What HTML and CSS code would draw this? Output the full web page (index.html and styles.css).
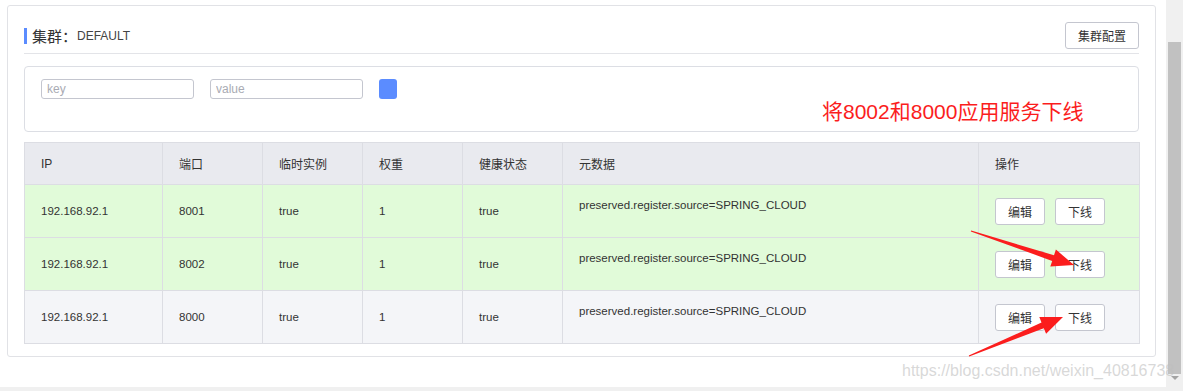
FILE: index.html
```html
<!DOCTYPE html>
<html lang="zh-CN">
<head>
    <meta charset="UTF-8">
    <meta name="viewport" content="width=device-width, initial-scale=1.0">
    <title>集群</title>
    <link rel="stylesheet" href="styles.css">
</head>
<body>
    <div class="viewport">
        <div class="page">
            <div class="card">
                <div class="card-header">
                    <div class="title"><span class="title-mark"></span>集群：<span class="cluster-name">DEFAULT</span></div>
                    <button class="btn">集群配置</button>
                </div>

                <div class="filter">
                    <input class="filter-input" type="text" placeholder="key">
                    <input class="filter-input" type="text" placeholder="value">
                    <button class="filter-add"></button>
                    <div class="note">将8002和8000应用服务下线</div>
                </div>

                <table class="instances">
                    <colgroup>
                        <col style="width: 138px">
                        <col style="width: 100px">
                        <col style="width: 100px">
                        <col style="width: 100px">
                        <col style="width: 100px">
                        <col style="width: 416px">
                        <col style="width: 161px">
                    </colgroup>
                    <thead>
                        <tr>
                            <th>IP</th>
                            <th>端口</th>
                            <th>临时实例</th>
                            <th>权重</th>
                            <th>健康状态</th>
                            <th>元数据</th>
                            <th>操作</th>
                        </tr>
                    </thead>
                    <tbody>
                        <tr class="online">
                            <td>192.168.92.1</td>
                            <td>8001</td>
                            <td>true</td>
                            <td>1</td>
                            <td>true</td>
                            <td class="meta">preserved.register.source=SPRING_CLOUD</td>
                            <td><button class="btn btn-sm">编辑</button><button class="btn btn-sm">下线</button></td>
                        </tr>
                        <tr class="online">
                            <td>192.168.92.1</td>
                            <td>8002</td>
                            <td>true</td>
                            <td>1</td>
                            <td>true</td>
                            <td class="meta">preserved.register.source=SPRING_CLOUD</td>
                            <td><button class="btn btn-sm">编辑</button><button class="btn btn-sm">下线</button></td>
                        </tr>
                        <tr>
                            <td>192.168.92.1</td>
                            <td>8000</td>
                            <td>true</td>
                            <td>1</td>
                            <td>true</td>
                            <td class="meta">preserved.register.source=SPRING_CLOUD</td>
                            <td><button class="btn btn-sm">编辑</button><button class="btn btn-sm">下线</button></td>
                        </tr>
                    </tbody>
                </table>
            </div>
        </div>
        <div class="vscroll">
            <div class="vscroll-thumb"></div>
            <div class="vscroll-arrow"></div>
        </div>
    </div>
    <div class="hscroll"></div>

    <!-- annotation arrows drawn over the screenshot -->
    <svg class="arrows" width="1183" height="391" viewBox="0 0 1183 391">
        <polygon points="971.2,230.5 1054,255.3 1055.9,249.6 1074,265 1050.3,266.6 1052.2,260.9 970.8,231.5" />
        <polygon points="968.8,355.5 1041.5,322.6 1039.3,317.1 1063,317 1046.1,333.7 1043.8,328.2 969.2,356.5" />
    </svg>
    <div class="watermark">https://blog.csdn.net/weixin_40816738</div>
</body>
</html>
```

FILE: styles.css
```css
* {
    box-sizing: border-box;
}
body {
    margin: 0;
    width: 1183px;
    height: 391px;
    overflow: hidden;
    background: #fff;
    font-family: "Liberation Sans", "Noto Sans CJK SC", sans-serif;
    color: #333;
    font-size: 12px;
    position: relative;
}
.viewport {
    display: flex;
    height: 387px;
}
.page {
    width: 1166px;
    padding: 5px 10px 0 7px;
}
.card {
    border: 1px solid #e1e2e6;
    border-radius: 3px;
    padding: 16px 16px 12px 16px;
}
.card-header {
    display: flex;
    justify-content: space-between;
    align-items: flex-start;
    height: 32px;
    padding-bottom: 4px;
    border-bottom: 1px solid #e3e4e8;
}
.title {
    display: flex;
    align-items: center;
    height: 27px;
    font-size: 15px;
    color: #333;
}
.title-mark {
    width: 3px;
    height: 16px;
    background: #5b8cff;
    margin-right: 5px;
}
.cluster-name {
    font-size: 12px;
    color: #444;
}
.btn {
    height: 27px;
    padding: 0 12px;
    border: 1px solid #c4c6cf;
    border-radius: 3px;
    background: #fff;
    color: #333;
    font-family: "Liberation Sans", "Noto Sans CJK SC", sans-serif;
    font-size: 12px;
    cursor: pointer;
}
.filter {
    position: relative;
    display: flex;
    align-items: flex-start;
    gap: 16px;
    margin-top: 12px;
    height: 66px;
    padding: 12px 16px;
    border: 1px solid #dcdee4;
    border-radius: 4px;
}
.filter-input {
    width: 153px;
    height: 20px;
    padding: 0 5px;
    border: 1px solid #c4c6cf;
    border-radius: 3px;
    font-family: "Liberation Sans", "Noto Sans CJK SC", sans-serif;
    font-size: 12px;
    outline: none;
}
.filter-input::placeholder {
    color: #a9abb3;
}
.filter-add {
    width: 18px;
    height: 20px;
    border: none;
    border-radius: 3px;
    background: #5b8cff;
}
.note {
    position: absolute;
    left: 797px;
    top: 28px;
    font-size: 21px;
    color: #fb1d1d;
    white-space: nowrap;
}
.instances {
    margin-top: 10px;
    width: 1115px;
    table-layout: fixed;
    border-collapse: collapse;
    border: 1px solid #dcdde3;
}
.instances th,
.instances td {
    border: 1px solid #dcdde3;
    padding: 0 16px;
    text-align: left;
    font-weight: normal;
    vertical-align: middle;
}
.instances th {
    height: 42px;
    background: #e9eaef;
}
.instances td {
    height: 53px;
    font-size: 11.5px;
    background: #f4f5f8;
}
.instances tr.online td {
    background: #e1fbd9;
}
.instances td.meta {
    vertical-align: top;
    padding-top: 14px;
}
.btn-sm {
    width: 50px;
    padding: 0;
    margin-right: 10px;
}
.vscroll {
    position: relative;
    width: 17px;
    background: #f0f0f0;
}
.vscroll-thumb {
    position: absolute;
    left: 2px;
    right: 2px;
    top: 42px;
    height: 332px;
    background: #c1c1c1;
}
.vscroll-arrow {
    position: absolute;
    left: 5px;
    top: 376px;
    border-left: 4px solid transparent;
    border-right: 4px solid transparent;
    border-top: 4px solid #a3a3a3;
}
.hscroll {
    height: 4px;
    background: #f0f0f0;
}
.arrows {
    position: absolute;
    left: 0;
    top: 0;
    pointer-events: none;
}
.arrows polygon {
    fill: #fb1d1d;
}
.watermark {
    position: absolute;
    left: 902px;
    top: 362px;
    font-family: "Liberation Sans", sans-serif;
    font-size: 16px;
    color: rgba(190, 190, 190, 0.6);
    white-space: nowrap;
    pointer-events: none;
}
```
